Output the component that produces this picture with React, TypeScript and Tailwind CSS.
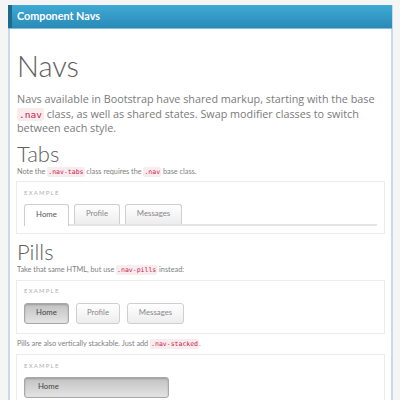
const Code = ({ children, big }: { children: string; big?: boolean }) => (
  <code
    className={
      big
        ? "rounded-[2px] bg-[#f9ecee] px-[2px] py-[1px] font-['DejaVu_Sans_Mono',monospace] text-[9.5px] leading-none text-[#c7254e]"
        : "rounded-[2px] bg-[#f9ecee] px-[1px] py-[1px] font-['DejaVu_Sans_Mono',monospace] text-[6.5px] leading-none text-[#c7254e]"
    }
  >
    {children}
  </code>
);

const ExampleLabel = () => (
  <div className="text-[6px] leading-[8px] tracking-[1.2px] text-[#b0b0b0]">EXAMPLE</div>
);

const tabs = [
  { label: "Home", w: "w-[45px]" },
  { label: "Profile", w: "w-[46px]" },
  { label: "Messages", w: "w-[57px]" },
];

const pills = [
  { label: "Home", w: "w-[45px]" },
  { label: "Profile", w: "w-[44px]" },
  { label: "Messages", w: "w-[57px]" },
];

const App = () => {
  return (
    <div className="h-[400px] w-[400px] overflow-hidden bg-[#f5f5f5] pt-[5px] pl-[8px] font-['Lato',sans-serif]">
      <div className="h-[420px] w-[385px] border-x-[2px] border-x-[#c9d8ee] bg-white">
        <div className="-ml-[2px] -mr-[1px] flex h-[24px] items-center border-b border-b-[#7cc0e0] bg-gradient-to-b from-[#3eaad5] to-[#2a8ab6]">
          <div className="mr-[5px] h-full w-[4px] bg-[#1d6a8a]" />
          <span className="text-[10.8px] font-bold text-white">Component Navs</span>
        </div>

        <div className="pr-[6px] pl-[7px]">
          <h1 className="mt-[21px] text-[29px] leading-[32px] font-light text-[#5e5e5e]">Navs</h1>
          <p className="mt-[10px] font-['Open_Sans',sans-serif] text-[10.8px] leading-[14.5px] text-[#7a7a7a]">
            Navs available in Bootstrap have shared markup, starting with the base{" "}
            <Code big>.nav</Code> class, as well as shared states. Swap modifier classes to switch
            between each style.
          </p>

          <h2 className="mt-[6px] text-[22px] leading-[24px] font-light text-[#5e5e5e]">Tabs</h2>
          <p className="text-[7.3px] leading-[11px] text-[#808080]">
            Note the <Code>.nav-tabs</Code> class requires the <Code>.nav</Code> base class.
          </p>

          <div className="mt-[4px] -ml-[1px] border border-[#ececec] px-[7px] pt-[7px] pb-[7px]">
            <ExampleLabel />
            <div className="mt-[7px] flex items-end gap-[5px] border-b-[2px] border-b-[#e4e4e4]">
              {tabs.map((t, i) => (
                <div
                  key={t.label}
                  className={
                    i === 0
                      ? `-mb-[2px] flex h-[22px] ${t.w} items-center justify-center rounded-t-[3px] border border-b-0 border-[#cfcfcf] bg-white text-[7.8px] text-[#555]`
                      : `flex h-[20px] ${t.w} items-center justify-center rounded-t-[3px] border border-b-0 border-[#cfcfcf] bg-gradient-to-b from-white to-[#ededed] text-[7.8px] text-[#888]`
                  }
                >
                  {t.label}
                </div>
              ))}
            </div>
          </div>

          <h2 className="mt-[6px] text-[22px] leading-[24px] font-light text-[#5e5e5e]">Pills</h2>
          <p className="text-[7.3px] leading-[11px] text-[#808080]">
            Take that same HTML, but use <Code>.nav-pills</Code> instead:
          </p>

          <div className="mt-[5px] -ml-[1px] border border-[#ececec] px-[7px] pt-[6px] pb-[9px]">
            <ExampleLabel />
            <div className="mt-[8px] flex gap-[7px]">
              {pills.map((t, i) => (
                <div
                  key={t.label}
                  className={
                    i === 0
                      ? `flex h-[21px] ${t.w} items-center justify-center rounded-[3px] border border-[#a8a8a8] bg-gradient-to-b from-[#c2c2c2] to-[#e4e4e4] text-[7.8px] text-[#444] shadow-[inset_0_1px_2px_rgba(0,0,0,0.2)]`
                      : `flex h-[21px] ${t.w} items-center justify-center rounded-[3px] border border-[#cfcfcf] bg-gradient-to-b from-white to-[#ededed] text-[7.8px] text-[#888]`
                  }
                >
                  {t.label}
                </div>
              ))}
            </div>
          </div>

          <p className="mt-[4px] text-[7.3px] leading-[11px] text-[#808080]">
            Pills are also vertically stackable. Just add <Code>.nav-stacked</Code>.
          </p>

          <div className="mt-[5px] -ml-[1px] border border-[#ececec] px-[7px] pt-[7px] pb-[9px]">
            <ExampleLabel />
            <div className="mt-[7px] flex h-[21px] w-[145px] items-center rounded-[3px] border border-[#a8a8a8] bg-gradient-to-b from-[#c2c2c2] to-[#e4e4e4] px-[13px] text-[7.8px] text-[#444] shadow-[inset_0_1px_2px_rgba(0,0,0,0.2)]">
              Home
            </div>
          </div>
        </div>
      </div>
    </div>
  );
};

export default App;
